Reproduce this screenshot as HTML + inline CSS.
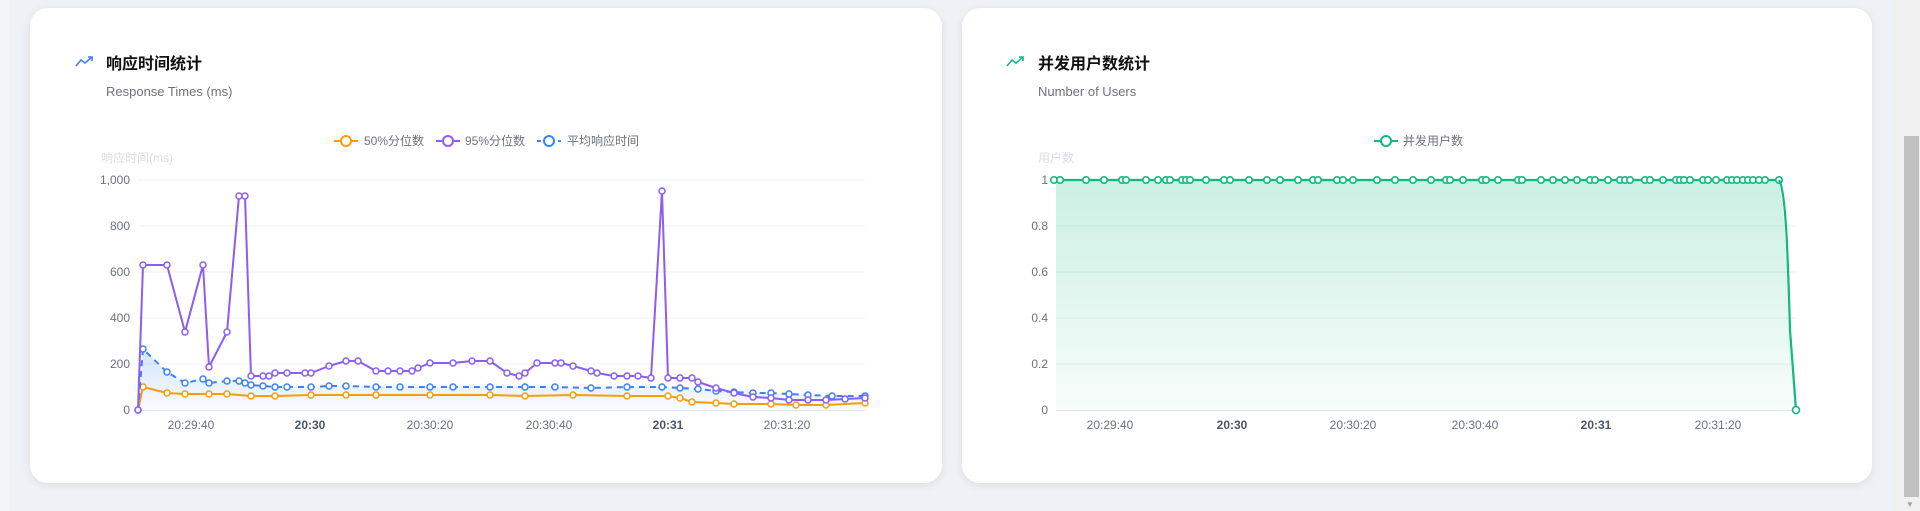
<!DOCTYPE html>
<html><head><meta charset="utf-8"><style>
html,body{margin:0;padding:0;width:1920px;height:511px;overflow:hidden;background:#eef1f5;font-family:"Liberation Sans","Noto Sans CJK SC",sans-serif}
.card{position:absolute;background:#fff;border-radius:18px;box-shadow:0 2px 10px rgba(0,0,0,0.08)}
svg{position:absolute;left:0;top:0}
</style></head><body>
<div style="position:absolute;left:0;top:0;width:10px;height:511px;background:#f3f5f8"></div>
<div class="card" style="left:30px;top:8px;width:912px;height:475px"></div>
<div class="card" style="left:962px;top:8px;width:910px;height:475px"></div>
<div style="position:absolute;left:1893px;top:0;width:27px;height:511px;background:#f0f0f0"></div>
<div style="position:absolute;left:1904px;top:136px;width:15px;height:361px;background:#c1c1c1"></div>
<div style="position:absolute;left:1906px;top:500px;font-size:8px;color:#a0a0a0">▼</div>
<svg width="1920" height="511" viewBox="0 0 1920 511" xmlns="http://www.w3.org/2000/svg" font-family="Liberation Sans, Noto Sans CJK SC, sans-serif">
<defs>
<marker id="mo" markerUnits="userSpaceOnUse" markerWidth="10" markerHeight="10" refX="5" refY="5"><circle cx="5" cy="5" r="3" fill="#fff" stroke="#f59e0b" stroke-width="1.5"/></marker>
<marker id="mp" markerUnits="userSpaceOnUse" markerWidth="10" markerHeight="10" refX="5" refY="5"><circle cx="5" cy="5" r="3" fill="#fff" stroke="#8b5cf6" stroke-width="1.5"/></marker>
<marker id="mb" markerUnits="userSpaceOnUse" markerWidth="10" markerHeight="10" refX="5" refY="5"><circle cx="5" cy="5" r="3" fill="#fff" stroke="#3b82f6" stroke-width="1.5"/></marker>
<marker id="mg" markerUnits="userSpaceOnUse" markerWidth="10" markerHeight="10" refX="5" refY="5"><circle cx="5" cy="5" r="3.2" fill="#fff" stroke="#10b981" stroke-width="1.6"/></marker>
<linearGradient id="gb" x1="0" y1="0" x2="0" y2="1"><stop offset="0" stop-color="#3b82f6" stop-opacity="0.22"/><stop offset="1" stop-color="#3b82f6" stop-opacity="0.03"/></linearGradient>
<linearGradient id="gg" x1="0" y1="0" x2="0" y2="1"><stop offset="0" stop-color="#10b981" stop-opacity="0.22"/><stop offset="1" stop-color="#10b981" stop-opacity="0.03"/></linearGradient>
</defs>
<!-- LEFT -->
<polyline points="76,66 81,60 85,63 92,57" fill="none" stroke="#3b82f6" stroke-width="1.6"/>
<polyline points="88,57 92,57 92,61" fill="none" stroke="#3b82f6" stroke-width="1.6"/>
<text x="106" y="69" font-size="16" font-weight="bold" fill="#111">响应时间统计</text>
<text x="106" y="96" font-size="13" fill="#6b7280">Response Times (ms)</text>
<g font-size="12" fill="#6b7280">
<line x1="334" y1="141" x2="358" y2="141" stroke="#f59e0b" stroke-width="2"/><circle cx="346" cy="141" r="5" fill="#fff" stroke="#f59e0b" stroke-width="2"/><text x="364" y="145">50%分位数</text>
<line x1="436" y1="141" x2="460" y2="141" stroke="#8b5cf6" stroke-width="2"/><circle cx="448" cy="141" r="5" fill="#fff" stroke="#8b5cf6" stroke-width="2"/><text x="465" y="145">95%分位数</text>
<line x1="537" y1="141" x2="561" y2="141" stroke="#3b82f6" stroke-width="2" stroke-dasharray="4 3"/><circle cx="549" cy="141" r="5" fill="#fff" stroke="#3b82f6" stroke-width="2"/><text x="567" y="145">平均响应时间</text>
</g>
<text x="101" y="162" font-size="12" fill="#d8dde8">响应时间(ms)</text>
<g stroke="#eef0f6" stroke-width="1">
<line x1="138" y1="180" x2="865" y2="180"/><line x1="138" y1="226" x2="865" y2="226"/><line x1="138" y1="272" x2="865" y2="272"/><line x1="138" y1="318" x2="865" y2="318"/><line x1="138" y1="364" x2="865" y2="364"/>
</g>
<line x1="138" y1="410.5" x2="865" y2="410.5" stroke="#dfe3ec"/>
<g font-size="12" fill="#6b7280" text-anchor="end">
<text x="130" y="184">1,000</text><text x="130" y="230">800</text><text x="130" y="276">600</text><text x="130" y="322">400</text><text x="130" y="368">200</text><text x="130" y="414">0</text>
</g>
<g font-size="12" fill="#6b7280" text-anchor="middle">
<text x="191" y="429">20:29:40</text><text x="310" y="429" font-weight="bold" fill="#4b5563">20:30</text><text x="430" y="429">20:30:20</text><text x="549" y="429">20:30:40</text><text x="668" y="429" font-weight="bold" fill="#4b5563">20:31</text><text x="787" y="429">20:31:20</text>
</g>
<polygon points="138,410 143,349 167,372 185,383 203,379 209,383 227,381 239,381 245,383 251,385 263,386 275,387 287,387 311,387 329,386 346,386 376,387 400,387 430,387 453,387 490,387 525,387 555,387 591,388 627,387 662,387 680,388 698,389 716,391 734,392 753,393 771,393 789,394 808,395 832,396 865,396 865,410" fill="url(#gb)"/>
<polyline points="138,410 143,387 167,393 185,394 209,394 227,394 251,396 275,396 311,395 346,395 376,395 430,395 490,395 525,396 573,395 627,396 668,396 680,398 692,402 716,403 734,404 771,404 796,405 826,405 865,403" fill="none" stroke="#f59e0b" stroke-width="2" stroke-linejoin="round" marker-start="url(#mo)" marker-mid="url(#mo)" marker-end="url(#mo)"/>
<polyline points="138,410 143,349 167,372 185,383 203,379 209,383 227,381 239,381 245,383 251,385 263,386 275,387 287,387 311,387 329,386 346,386 376,387 400,387 430,387 453,387 490,387 525,387 555,387 591,388 627,387 662,387 680,388 698,389 716,391 734,392 753,393 771,393 789,394 808,395 832,396 865,396" fill="none" stroke="#3b82f6" stroke-width="2" stroke-dasharray="6 5" stroke-linejoin="round" marker-start="url(#mb)" marker-mid="url(#mb)" marker-end="url(#mb)"/>
<polyline points="138,410 143,265 167,265 185,332 203,265 209,367 227,332 239,196 245,196 251,376 263,376 269,376 275,373 287,373 305,373 311,373 329,366 346,361 358,361 376,371 388,371 400,371 412,371 418,368 430,363 453,363 472,361 490,361 507,373 519,376 525,373 537,363 555,363 561,363 573,366 591,371 597,373 614,376 627,376 638,376 651,378 662,191 668,378 680,378 692,378 698,382 716,388 734,393 753,397 771,398 789,400 808,400 826,400 845,399 865,398" fill="none" stroke="#8b5cf6" stroke-width="2" stroke-linejoin="round" marker-start="url(#mp)" marker-mid="url(#mp)" marker-end="url(#mp)"/>
<!-- RIGHT -->
<polyline points="1007,66 1012,60 1016,63 1023,57" fill="none" stroke="#10b981" stroke-width="1.6"/>
<polyline points="1019,57 1023,57 1023,61" fill="none" stroke="#10b981" stroke-width="1.6"/>
<text x="1038" y="69" font-size="16" font-weight="bold" fill="#111">并发用户数统计</text>
<text x="1038" y="96" font-size="13" fill="#6b7280">Number of Users</text>
<line x1="1374" y1="141" x2="1398" y2="141" stroke="#10b981" stroke-width="2"/><circle cx="1386" cy="141" r="5" fill="#fff" stroke="#10b981" stroke-width="2"/><text x="1403" y="145" font-size="12" fill="#6b7280">并发用户数</text>
<text x="1038" y="162" font-size="12" fill="#d8dde8">用户数</text>
<g stroke="#e6f0ee" stroke-width="1">
<line x1="1056" y1="226" x2="1796" y2="226"/><line x1="1056" y1="272" x2="1796" y2="272"/><line x1="1056" y1="318" x2="1796" y2="318"/><line x1="1056" y1="364" x2="1796" y2="364"/>
</g>
<polygon points="1056,180 1779,180 1784,220 1796,410 1056,410" fill="url(#gg)"/>
<line x1="1056" y1="410.5" x2="1796" y2="410.5" stroke="#dfe3ec"/>
<g font-size="12" fill="#6b7280" text-anchor="end">
<text x="1048" y="184">1</text><text x="1048" y="230">0.8</text><text x="1048" y="276">0.6</text><text x="1048" y="322">0.4</text><text x="1048" y="368">0.2</text><text x="1048" y="414">0</text>
</g>
<g font-size="12" fill="#6b7280" text-anchor="middle">
<text x="1110" y="429">20:29:40</text><text x="1232" y="429" font-weight="bold" fill="#4b5563">20:30</text><text x="1353" y="429">20:30:20</text><text x="1475" y="429">20:30:40</text><text x="1596" y="429" font-weight="bold" fill="#4b5563">20:31</text><text x="1718" y="429">20:31:20</text>
</g>
<polyline points="1054,180 1060,180 1086,180 1104,180 1122,180 1126,180 1146,180 1158,180 1166,180 1170,180 1182,180 1186,180 1190,180 1206,180 1224,180 1230,180 1249,180 1267,180 1280,180 1298,180 1313,180 1318,180 1337,180 1343,180 1353,180 1377,180 1395,180 1413,180 1431,180 1446,180 1450,180 1463,180 1482,180 1486,180 1498,180 1518,180 1522,180 1541,180 1553,180 1565,180 1577,180 1590,180 1595,180 1608,180 1620,180 1625,180 1630,180 1645,180 1650,180 1663,180 1676,180 1680,180 1684,180 1690,180 1703,180 1708,180 1716,180 1727,180 1732,180 1737,180 1743,180 1748,180 1753,180 1759,180 1765,180 1779,180" fill="none" stroke="#10b981" stroke-width="2.2" marker-start="url(#mg)" marker-mid="url(#mg)" marker-end="url(#mg)"/>
<path d="M1779,180 C1786,190 1788,260 1790,330 L1796,410" fill="none" stroke="#10b981" stroke-width="2.2"/>
<circle cx="1796" cy="410" r="3.5" fill="#fff" stroke="#10b981" stroke-width="1.6"/>
</svg>
</body></html>
